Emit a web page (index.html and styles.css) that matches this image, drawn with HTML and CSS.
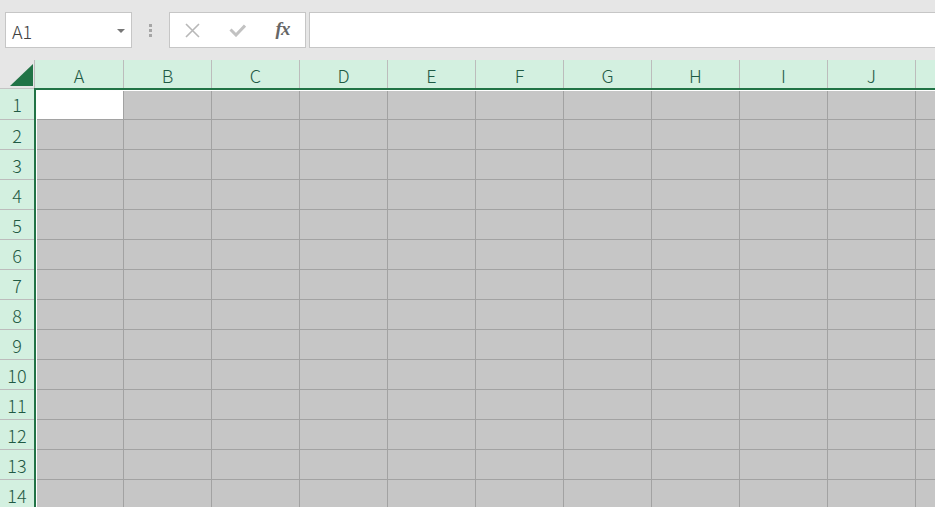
FILE: index.html
```html
<!DOCTYPE HTML>
<html lang="ja">
<head>
    <meta charset="UTF-8">
    <title>Book1</title>
    <link rel="stylesheet" href="styles.css">
</head>
<body>

<div class="toolbar">
    <div class="nameBox">
        <span>A1</span>
        <svg class="dropArrow" width="8" height="4" viewBox="0 0 8 4"><polygon points="0,0 8,0 4,4" fill="#777"/></svg>
    </div>
    <div class="grip"><b></b><b></b><b></b></div>
    <div class="fnBox">
        <span class="fnBtn">
            <svg width="15" height="15" viewBox="0 0 15 15"><path d="M1 1 L14 14 M14 1 L1 14" stroke="#b8b8b8" stroke-width="1.6" fill="none"/></svg>
        </span>
        <span class="fnBtn">
            <svg width="17" height="13" viewBox="0 0 17 13"><polyline points="1.5,5.5 7,11 16,1.5" stroke="#c2c2c2" stroke-width="3" fill="none"/></svg>
        </span>
        <span class="fnBtn fx">fx</span>
    </div>
    <div class="formulaBar"></div>
</div>

<div class="sheet">
    <div class="corner">
        <svg width="23" height="22" viewBox="0 0 23 22"><polygon points="23,0 23,22 0,22" fill="#217346"/></svg>
    </div>
    <div class="colHeads">
        <div class="ch">A</div><div class="ch">B</div><div class="ch">C</div><div class="ch">D</div><div class="ch">E</div>
        <div class="ch">F</div><div class="ch">G</div><div class="ch">H</div><div class="ch">I</div><div class="ch">J</div>
        <div class="ch"></div>
    </div>
    <div class="rowHeads">
        <div class="rh">1</div><div class="rh">2</div><div class="rh">3</div><div class="rh">4</div><div class="rh">5</div>
        <div class="rh">6</div><div class="rh">7</div><div class="rh">8</div><div class="rh">9</div><div class="rh">10</div>
        <div class="rh">11</div><div class="rh">12</div><div class="rh">13</div><div class="rh">14</div>
    </div>
    <div class="cells">
        <div class="grid">
            <div class="row"><i class="c sel"></i><i class="c"></i><i class="c"></i><i class="c"></i><i class="c"></i><i class="c"></i><i class="c"></i><i class="c"></i><i class="c"></i><i class="c"></i><i class="c"></i></div>
            <div class="row"><i class="c"></i><i class="c"></i><i class="c"></i><i class="c"></i><i class="c"></i><i class="c"></i><i class="c"></i><i class="c"></i><i class="c"></i><i class="c"></i><i class="c"></i></div>
            <div class="row"><i class="c"></i><i class="c"></i><i class="c"></i><i class="c"></i><i class="c"></i><i class="c"></i><i class="c"></i><i class="c"></i><i class="c"></i><i class="c"></i><i class="c"></i></div>
            <div class="row"><i class="c"></i><i class="c"></i><i class="c"></i><i class="c"></i><i class="c"></i><i class="c"></i><i class="c"></i><i class="c"></i><i class="c"></i><i class="c"></i><i class="c"></i></div>
            <div class="row"><i class="c"></i><i class="c"></i><i class="c"></i><i class="c"></i><i class="c"></i><i class="c"></i><i class="c"></i><i class="c"></i><i class="c"></i><i class="c"></i><i class="c"></i></div>
            <div class="row"><i class="c"></i><i class="c"></i><i class="c"></i><i class="c"></i><i class="c"></i><i class="c"></i><i class="c"></i><i class="c"></i><i class="c"></i><i class="c"></i><i class="c"></i></div>
            <div class="row"><i class="c"></i><i class="c"></i><i class="c"></i><i class="c"></i><i class="c"></i><i class="c"></i><i class="c"></i><i class="c"></i><i class="c"></i><i class="c"></i><i class="c"></i></div>
            <div class="row"><i class="c"></i><i class="c"></i><i class="c"></i><i class="c"></i><i class="c"></i><i class="c"></i><i class="c"></i><i class="c"></i><i class="c"></i><i class="c"></i><i class="c"></i></div>
            <div class="row"><i class="c"></i><i class="c"></i><i class="c"></i><i class="c"></i><i class="c"></i><i class="c"></i><i class="c"></i><i class="c"></i><i class="c"></i><i class="c"></i><i class="c"></i></div>
            <div class="row"><i class="c"></i><i class="c"></i><i class="c"></i><i class="c"></i><i class="c"></i><i class="c"></i><i class="c"></i><i class="c"></i><i class="c"></i><i class="c"></i><i class="c"></i></div>
            <div class="row"><i class="c"></i><i class="c"></i><i class="c"></i><i class="c"></i><i class="c"></i><i class="c"></i><i class="c"></i><i class="c"></i><i class="c"></i><i class="c"></i><i class="c"></i></div>
            <div class="row"><i class="c"></i><i class="c"></i><i class="c"></i><i class="c"></i><i class="c"></i><i class="c"></i><i class="c"></i><i class="c"></i><i class="c"></i><i class="c"></i><i class="c"></i></div>
            <div class="row"><i class="c"></i><i class="c"></i><i class="c"></i><i class="c"></i><i class="c"></i><i class="c"></i><i class="c"></i><i class="c"></i><i class="c"></i><i class="c"></i><i class="c"></i></div>
            <div class="row"><i class="c"></i><i class="c"></i><i class="c"></i><i class="c"></i><i class="c"></i><i class="c"></i><i class="c"></i><i class="c"></i><i class="c"></i><i class="c"></i><i class="c"></i></div>
        </div>
    </div>
</div>

</body>
</html>
```

FILE: styles.css
```css
html, body {
    margin: 0;
    width: 935px;
    height: 507px;
    overflow: hidden;
}
body {
    background-color: #e6e6e6;
    font-family: "Noto Sans CJK JP", "Noto Sans", sans-serif;
    font-weight: 300;
}

/* formula toolbar */
.toolbar {
    height: 60px;
    box-sizing: border-box;
    padding: 12px 0 0 5px;
    display: flex;
    align-items: flex-start;
}
.nameBox {
    width: 127px;
    height: 36px;
    box-sizing: border-box;
    border: 1px solid #c6c6c6;
    background-color: #fff;
    display: flex;
    align-items: center;
    justify-content: space-between;
    padding: 0 6px 0 6px;
    font-size: 18px;
    color: #404040;
}
.nameBox span {
    line-height: 1;
    padding-top: 1px;
}
.dropArrow {
    margin-top: 1px;
}
.grip {
    width: 37px;
    height: 36px;
    display: flex;
    flex-direction: column;
    align-items: center;
    justify-content: center;
    gap: 2px;
}
.grip b {
    display: block;
    width: 3px;
    height: 3px;
    background-color: #a6a6a6;
}
.fnBox {
    width: 137px;
    height: 36px;
    box-sizing: border-box;
    border: 1px solid #c6c6c6;
    background-color: #fff;
    display: flex;
    align-items: center;
}
.fnBtn {
    width: 45px;
    height: 34px;
    display: flex;
    align-items: center;
    justify-content: center;
}
.fnBtn.fx {
    font-family: "Liberation Serif", serif;
    font-style: italic;
    font-weight: bold;
    font-size: 19px;
    color: #666;
    letter-spacing: -1px;
    padding-bottom: 2px;
    box-sizing: border-box;
}
.formulaBar {
    flex: 1;
    height: 36px;
    box-sizing: border-box;
    margin-left: 3px;
    border: 1px solid #c6c6c6;
    border-right: none;
    background-color: #fff;
}

/* sheet */
.sheet {
    display: grid;
    grid-template-columns: 34px 1fr;
    grid-template-rows: 28px 1fr;
    height: 447px;
    overflow: hidden;
}
.corner {
    background-color: #e6e6e6;
}
.corner svg {
    display: block;
    margin: 4px 0 0 10px;
}
.colHeads {
    display: flex;
    overflow: hidden;
    border-left: 1px solid #bcbcbc;
    background-color: #d3f0e0;
}
.ch {
    flex: 0 0 88px;
    box-sizing: border-box;
    border-right: 1px solid #bcbcbc;
    text-align: center;
    line-height: 30px;
    font-size: 18px;
    color: #1f5a44;
}
.ch:first-child {
    flex-basis: 89px;
}
.rowHeads {
    border-top: 1px solid #c4c4c4;
    background-color: #d3f0e0;
    overflow: hidden;
}
.rh {
    height: 30px;
    box-sizing: border-box;
    border-bottom: 1px solid #bcbcbc;
    text-align: center;
    line-height: 30px;
    font-size: 18px;
    color: #1f5a44;
}
.rh:first-child {
    height: 31px;
    line-height: 31px;
}
.cells {
    border-top: 2px solid #217346;
    border-left: 2px solid #217346;
    overflow: hidden;
}
.grid {
    border-top: 1px solid #fff;
    border-left: 1px solid #fff;
}
.row {
    display: flex;
}
.c {
    display: block;
    flex: 0 0 88px;
    height: 30px;
    box-sizing: border-box;
    border-right: 1px solid #a2a2a2;
    border-bottom: 1px solid #a2a2a2;
    background-color: #c6c6c6;
}
.c:first-child {
    flex-basis: 87px;
}
.row:first-child .c {
    height: 29px;
}
.c.sel {
    background-color: #fff;
}
```
